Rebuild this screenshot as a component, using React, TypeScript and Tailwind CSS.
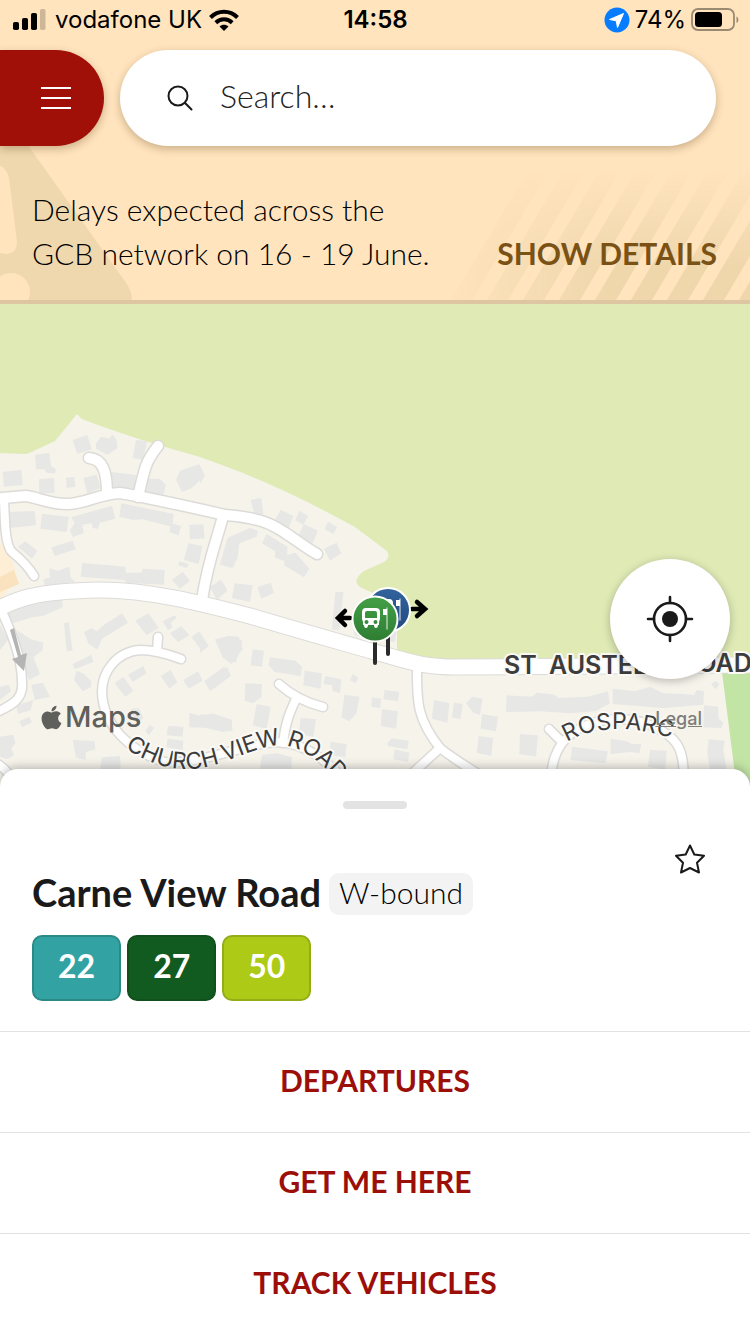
import { FaApple } from "react-icons/fa";

const routes = [
  { number: "22", style: "border-[#2b8a88] bg-[#32a3a2]" },
  { number: "27", style: "border-[#0f501d] bg-[#115a20]" },
  { number: "50", style: "border-[#94ad17] bg-[#adca17]" },
];

const actions = ["DEPARTURES", "GET ME HERE", "TRACK VEHICLES"];

const wideRoads = [
  "M-10 613C15 599 35 591 100 590C150 590 200 603 250 616C300 631 340 642 375 652C405 660 420 667 455 667L760 665",
];

const roads = [
  "M2 498L26 496C40 498 48 504 67 504C85 504 98 494 120 493C145 497 190 507 225 515C265 518 275 526 290 536C300 543 308 549 317 554",
  "M89 458C103 459 107 472 107 494",
  "M158 446C146 461 145 466 138 497",
  "M223 516C217 540 208 560 202 600",
];

const lanes = [
  "M4 498C5 530 6 546 12 552C22 560 28 566 34 576",
  "M0 607C8 625 22 655 22 682C24 700 10 706 -5 713",
  "M181 659C165 653 153 650 140 650C116 652 102 672 102 692C103 725 130 752 165 762C205 764 240 745 275 742C300 742 320 755 340 775",
  "M158 637L157 651",
  "M279 684C290 694 303 702 323 707",
  "M296 699C290 712 286 720 283 743",
  "M417 668C417 700 416 718 440 748C455 760 468 767 490 782",
  "M440 748L405 780",
  "M549 729L560 740",
  "M549 788C552 765 554 748 570 735C595 715 635 714 662 731C678 740 686 752 683 788",
  "M-6 762C5 767 12 776 18 790",
];

const tiles = [
  {
    transform: "translate(0 400) scale(.3333)",
    shapes: [
      "M218 120L262 105L275 148L232 162Z",
      "M288 130L304 110L328 116L338 103L350 120L352 145L322 164L288 146Z",
      "M408 120L441 124L430 180L398 174Z",
      "M105 164L148 158L153 198L168 208L165 220L138 218L134 207L108 208Z",
      "M8 215L64 210L68 255L12 260Z",
      "M117 238L162 234L164 278L118 282Z",
      "M198 234L223 230L226 260L200 264Z",
      "M250 234L290 224L302 264L262 280Z",
      "M334 216L408 225L404 266L330 259Z",
      "M438 236L480 236L497 254L491 284L432 276Z",
      "M528 240L540 212L598 193L615 228L575 264L546 276Z",
      "M24 336L104 333L108 376L28 384Z",
      "M126 341L206 350L200 396L121 386Z",
      "M214 352L336 317L346 356L299 368L294 386L278 384L275 370L246 374L252 398L218 412L210 390L224 370Z",
      "M364 310L522 342L516 380L428 358L400 360L358 350Z",
      "M514 370L543 378L536 406L508 396Z",
      "M568 375L610 373L614 415L570 418Z",
      "M565 430L607 438L596 492L552 480Z",
      "M538 484L566 492L560 504L535 496Z",
      "M76 424L112 452L96 476L54 440Z",
      "M154 442L218 422L228 448L164 468Z",
      "M247 489L376 500L378 518L424 518L428 506L494 510L492 554L378 548L374 540L242 530Z",
      "M148 505L174 512L208 500L212 532L224 545L134 558L130 538L150 532Z",
      "M516 540L548 515L570 542L540 566Z",
      "M634 568L658 540L682 572L652 598Z",
      "M750 384L688 420L660 490L700 502L716 452L704 436L750 412Z",
      "M704 556L750 556L750 600L698 594Z",
    ],
  },
  {
    transform: "translate(200 440) scale(.3333)",
    shapes: [
      "M0 80L14 108L0 132Z",
      "M152 180L184 174L190 222L164 226Z",
      "M222 244L242 210L280 228L266 264Z",
      "M298 212L325 228L310 254L286 240Z",
      "M312 252L354 272L338 310L294 290Z",
      "M384 245L411 262L400 282L374 268Z",
      "M372 326L410 308L424 340L390 362Z",
      "M200 282L262 320L262 345L286 338L328 386L312 412L252 376L254 364L224 352L226 334L186 310Z",
      "M150 264L174 272L170 290L118 310L112 356L96 384L60 374L82 294Z",
      "M30 440L64 420L82 450L48 476Z",
      "M104 430L158 436L150 486L96 474Z",
      "M172 442L212 428L222 458L184 476Z",
      "M406 456L430 456L418 570L396 568Z",
      "M460 574L590 574L584 606L466 588Z",
    ],
  },
  {
    transform: "translate(0 570) scale(.3333)",
    shapes: [
      "M18 130L104 92L186 90L188 112L128 138L96 142L40 160Z",
      "M0 165L24 210L0 240Z",
      "M50 180L90 206L130 218L128 240L100 262L120 312L88 330L70 290Z",
      "M94 344L128 338L150 380L104 390Z",
      "M48 406L100 390L92 420L54 432Z",
      "M192 160L206 156L218 242L200 244Z",
      "M252 186L276 174L290 184L316 162L366 130L384 158L306 206L292 238L266 222Z",
      "M406 152L446 130L476 174L440 196Z",
      "M488 154L524 136L530 144L512 158L518 172L504 180Z",
      "M510 190L544 168L568 196L534 216Z",
      "M574 202L598 184L626 228L606 242Z",
      "M645 208L690 198L716 200L728 238L694 282L668 262Z",
      "M218 282L274 254L280 276L224 298Z",
      "M230 302L252 312L274 334L272 352L248 364L222 330Z",
      "M344 340L370 320L400 362L376 380Z",
      "M384 314L430 288L440 310L398 336Z",
      "M482 318L512 300L532 336L508 356Z",
      "M550 330L594 304L608 332L566 356Z",
      "M616 334L682 290L692 318L636 360Z",
      "M568 428L622 444L632 430L694 450L698 482L666 486L640 474L568 472Z",
      "M504 468L550 470L548 500L500 496Z",
      "M502 506L550 512L548 540L500 532Z",
      "M218 510L284 514L286 538L258 546L256 570L228 562Z",
      "M0 500L40 494L46 520L34 536L42 556L20 568L0 560Z",
      "M58 454L88 440L96 456L66 472Z",
      "M0 350L26 344L34 362L0 390Z",
      "M306 562L360 558L362 600L300 600Z",
      "M392 418L416 414L430 444L410 460Z",
      "M436 482L450 464L462 474L446 496Z",
    ],
  },
  {
    transform: "translate(200 620) scale(.3333)",
    shapes: [
      "M0 40L24 80L0 98Z",
      "M46 60L86 48L128 62L108 126L84 126Z",
      "M12 184L72 140L92 168L30 212Z",
      "M158 88L192 92L186 140L152 136Z",
      "M210 112L286 122L306 140L302 168L224 156L206 136Z",
      "M314 152L366 160L362 206L310 196Z",
      "M376 168L424 178L420 220L398 212L396 196L370 192Z",
      "M458 162L476 174L466 190L450 180Z",
      "M136 190L186 192L184 232L158 250L134 242Z",
      "M170 252L212 260L200 326L158 316Z",
      "M302 294L348 298L340 350L296 342Z",
      "M434 224L478 230L470 280L448 304L424 292Z",
      "M516 232L544 236L540 264L514 260Z",
      "M554 210L598 216L594 244L550 238Z",
      "M546 268L594 274L588 326L542 318Z",
      "M392 366L440 372L436 412L386 404Z",
      "M562 370L576 355L626 362L622 388L564 378Z",
      "M584 388L628 398L624 426L580 418Z",
      "M702 240L748 250L742 308L696 296Z",
      "M762 248L788 252L782 298L756 292Z",
      "M798 250L816 230L848 236L840 284L820 278Z",
      "M846 282L894 290L888 334L842 326Z",
      "M836 348L880 354L874 408L830 398Z",
      "M0 284L44 282L96 300L94 330L50 332L0 318Z",
      "M186 404L232 400L276 412L274 446L180 446Z",
    ],
  },
  {
    transform: "translate(450 550) scale(.3333)",
    shapes: [
      "M170 436L246 440L260 428L314 434L324 444L414 440L474 424L480 460L436 484L360 490L270 484L168 486Z",
      "M488 416L556 424L600 410L640 430L700 432L732 436L740 420L762 424L760 464L640 474L488 462Z",
      "M784 402L798 392L808 404L796 418Z",
      "M762 466L804 470L806 506L820 518L814 534L760 532Z",
      "M210 552L264 556L258 620L208 612Z",
      "M366 590L474 604L466 640L362 630Z",
      "M482 566L530 574L546 582L574 582L568 610L540 606L482 612Z",
      "M600 600L650 602L646 660L594 650Z",
      "M776 568L824 572L820 600L830 660L780 660L772 606Z",
    ],
  },
];

function SignalIcon() {
  return (
    <svg className="h-6 w-9" viewBox="0 0 36 24" aria-label="Signal strength">
      <rect x="1" y="14" width="6" height="8" rx="1.8" />
      <rect x="10" y="10" width="6" height="12" rx="1.8" />
      <rect x="19" y="5" width="6" height="17" rx="1.8" />
      <rect x="28" y="1" width="5.5" height="21" rx="1.8" fill="#cdb798" />
    </svg>
  );
}

function WifiIcon() {
  return (
    <svg className="h-6 w-[30px]" viewBox="0 0 30 24" fill="none" stroke="#000" strokeWidth="4" aria-label="Wi-Fi">
      <path d="M1.500 9.500C9 1.800 21 1.800 28.500 9.500" />
      <path d="M6.800 14.800C11.500 10.200 18.500 10.200 23.200 14.800" />
      <path d="M10.500 18.500C13 16.200 17 16.200 19.500 18.500L15 23Z" fill="#000" stroke="none" />
    </svg>
  );
}

function LocationIcon() {
  return (
    <svg className="size-[26px]" viewBox="0 0 26 26" aria-label="Location in use">
      <circle cx="13" cy="13" r="12.500" fill="#087cff" />
      <path d="M19.500 6.500L13.500 20.500L12.200 13.800L5.500 12.500Z" fill="#fff" stroke="#fff" strokeLinejoin="round" />
    </svg>
  );
}

function BatteryIcon() {
  return (
    <svg className="h-6 w-12" viewBox="0 0 48 24" aria-label="Battery">
      <rect x="1" y="1" width="42" height="21" rx="6" fill="none" stroke="#9b8a72" strokeWidth="1.800" />
      <rect x="4" y="4" width="27" height="15" rx="3.500" />
      <path d="M45.500 8.500C48 9.500 48 14 45.500 15Z" fill="#9b8a72" />
    </svg>
  );
}

function StatusBar() {
  return (
    <div className="grid h-10 grid-cols-[1fr_auto_1fr] items-center pr-[11px] pl-3 font-[Inter,sans-serif] text-2xl text-black">
      <div className="flex items-center gap-[7px]">
        <SignalIcon />
        <span>vodafone UK</span>
        <WifiIcon />
      </div>
      <span className="font-semibold">14:58</span>
      <div className="flex items-center justify-end gap-[5px]">
        <LocationIcon />
        <span>74%</span>
        <BatteryIcon />
      </div>
    </div>
  );
}

function AlertDecoration() {
  return (
    <>
      <svg className="absolute bottom-0 left-0 h-[170px] w-[140px]" viewBox="0 130 140 170" aria-hidden="true">
        <path d="M0 130H17L124 280Q132 290 132 300H0Z" fill="#f0d8ae" />
        <path d="M-12 165Q5 162 9 178L17 242Q17 253 7 254L-8 252Z" fill="#ffe4be" />
        <circle cx="11" cy="292" r="19" fill="#ffe4be" />
      </svg>
      <svg className="absolute right-0 bottom-0 h-[130px] w-[310px]" viewBox="440 170 310 130" aria-hidden="true">
        <defs>
          <linearGradient id="stripe-x" x1="0" x2="1">
            <stop offset="0" stopColor="#fff" stopOpacity="0" />
            <stop offset=".55" stopColor="#fff" />
          </linearGradient>
          <linearGradient id="stripe-y" x1="0" y1="0" x2="0" y2="1">
            <stop offset="0" stopColor="#000" />
            <stop offset=".75" stopColor="#000" stopOpacity="0" />
          </linearGradient>
          <mask id="stripe-mask" maskUnits="userSpaceOnUse" x="440" y="170" width="310" height="130">
            <rect x="440" y="170" width="310" height="130" fill="url(#stripe-x)" />
            <rect x="440" y="170" width="310" height="130" fill="url(#stripe-y)" />
          </mask>
        </defs>
        <g mask="url(#stripe-mask)" fill="#efd6ab">
          {[451, 487, 523, 559, 595, 631, 667, 703, 739].map((x) => (
            <path key={x} d={`M${x} 300h21l77 -130h-21Z`} />
          ))}
        </g>
      </svg>
    </>
  );
}

function Header() {
  return (
    <header className="relative border-b-4 border-[#dfc6a3] bg-[#ffe4be]">
      <AlertDecoration />
      <div className="relative">
        <StatusBar />
        <div className="flex gap-4 pt-[10px] pr-[34px]">
          <button
            type="button"
            aria-label="Menu"
            className="flex h-24 w-[104px] items-center justify-end rounded-r-full bg-[#a11008] pr-[33px] shadow-[0_3px_8px_rgba(80,50,10,0.3)]"
          >
            <svg className="h-6 w-[30px]" viewBox="0 0 30 24" stroke="#fff" strokeWidth="2" aria-hidden="true">
              <path d="M0 2H30M0 12H30M0 22H30" />
            </svg>
          </button>
          <label className="flex h-24 min-w-0 flex-1 items-center gap-[27px] rounded-full bg-white pr-8 pl-[47px] shadow-[0_3px_8px_rgba(80,50,10,0.3)]">
            <svg className="size-[26px] shrink-0" viewBox="0 0 26 26" fill="none" stroke="#1a1a1a" strokeWidth="2" strokeLinecap="round" aria-hidden="true">
              <circle cx="11" cy="11" r="9.500" />
              <path d="M17.800 17.800L24.500 24.500" />
            </svg>
            <input
              type="search"
              aria-label="Search"
              placeholder="Search…"
              className="min-w-0 flex-1 bg-transparent pb-1 text-[32px] font-light outline-none placeholder:text-[#222]"
            />
          </label>
        </div>
        <div className="flex items-end justify-between gap-8 pt-[41px] pr-[33px] pb-[25px] pl-8 text-[30px] leading-[44px]">
          <p className="w-[410px] font-light text-black">Delays expected across the GCB network on 16 - 19 June.</p>
          <button type="button" className="shrink-0 font-bold text-[#7a5216]">
            SHOW DETAILS
          </button>
        </div>
      </div>
    </header>
  );
}

function BusGlyph({ x, y }: { x: number; y: number }) {
  return (
    <g transform={`translate(${x} ${y})`}>
      <path
        fill="#fff"
        fillRule="evenodd"
        d="M-9 -10H1Q5 -10 5 -6V1L4 4V7H3Q3 10 1 10Q-1 10 -1 7H-7Q-7 10 -9 10Q-11 10 -11 7H-12V4L-13 1V-6Q-13 -10 -9 -10ZM-8 -7Q-10 -7 -10 -5V0H2V-5Q2 -7 0 -7ZM-8.500 2A2 2 0 1 0 -8.500 6A2 2 0 1 0 -8.500 2ZM.5 2A2 2 0 1 0 .5 6A2 2 0 1 0 .5 2Z"
      />
      <path d="M12 -10V11" stroke="#fff" strokeOpacity=".6" strokeWidth="1.500" />
      <rect x="8" y="-9" width="4" height="6" fill="#fff" />
    </g>
  );
}

function StreetMap() {
  return (
    <svg
      className="absolute inset-0 size-full"
      viewBox="0 304 750 481"
      preserveAspectRatio="xMidYMin slice"
      role="img"
      aria-label="Map around Carne View Road"
    >
      <defs>
        <linearGradient id="pin-green" x1="0" y1="0" x2="0" y2="1">
          <stop offset="0" stopColor="#43a047" />
          <stop offset="1" stopColor="#2e7d32" />
        </linearGradient>
        <linearGradient id="pin-blue" x1="0" y1="0" x2="0" y2="1">
          <stop offset="0" stopColor="#31639c" />
          <stop offset="1" stopColor="#22497f" />
        </linearGradient>
        <path id="church-view" d="M125 748C145 761 165 770 192 769C225 766 250 748 278 745C300 745 320 760 345 790" />
        <path id="rosparc" d="M567 742C595 725 635 725 680 741" />
      </defs>
      <rect x="0" y="304" width="750" height="486" fill="#dfeab5" />
      <path
        fill="#f5f3ea"
        d="M0 453L27 454L55 441L77 414L82 419C120 434 165 447 200 457C255 476 300 497 355 527L387 551Q391 557 384 562L364 571Q350 582 362 588L380 596L397 615V667H750V790H0Z"
      />
      <path d="M722 672L737 790H750V672Z" fill="#c2e4a4" />
      <path d="M0 542L14 564L16 580L0 600Z" fill="#fdeed5" />
      <path d="M0 577L14 570L19 584L0 592Z" fill="#f9e2bd" />
      {tiles.map((tile) => (
        <g key={tile.transform} transform={tile.transform} fill="#e7e7e6">
          {tile.shapes.map((d) => (
            <path key={d} d={d} />
          ))}
        </g>
      ))}
      <g fill="none" strokeLinecap="round" strokeLinejoin="round">
        <g stroke="#dcdbd8">
          {wideRoads.map((d) => <path key={d} d={d} strokeWidth="17" />)}
          {roads.map((d) => <path key={d} d={d} strokeWidth="13" />)}
          {lanes.map((d) => <path key={d} d={d} strokeWidth="11" />)}
        </g>
        <g stroke="#fff">
          {wideRoads.map((d) => <path key={d} d={d} strokeWidth="15" />)}
          {roads.map((d) => <path key={d} d={d} strokeWidth="10" />)}
          {lanes.map((d) => <path key={d} d={d} strokeWidth="8" />)}
        </g>
      </g>
      <path d="M10 630L14 628L21 655L27 653L24 671L12 659L18 657Z" fill="#b4b4b4" />
      <g
        className="font-[Inter,sans-serif]"
        fill="#3c3c3c"
        stroke="#faf9f5"
        strokeWidth="4"
        strokeLinejoin="round"
        paintOrder="stroke"
      >
        <g fontSize="25" fontWeight="600">
          <text x="504" y="674">ST</text>
          <text x="549" y="674">AUSTELL</text>
          <text x="681" y="672">ROAD</text>
        </g>
        <g fontSize="23">
          <text>
            <textPath href="#church-view">CHURCH</textPath>
          </text>
          <text>
            <textPath href="#church-view" startOffset="105">VIEW</textPath>
          </text>
          <text>
            <textPath href="#church-view" startOffset="169">ROAD</textPath>
          </text>
          <text>
            <textPath href="#rosparc">ROSPARC</textPath>
          </text>
        </g>
      </g>
      <g strokeLinecap="round">
        <path d="M388 625V654M375 640V663" stroke="#2b2b2b" strokeWidth="4" />
        <path d="M412 609H424M417 602L425 609L417 616" fill="none" stroke="#000" strokeWidth="4.500" />
        <circle cx="388" cy="610" r="22" fill="url(#pin-blue)" stroke="#fff" strokeWidth="2" />
        <BusGlyph x={388} y={609} />
        <path d="M350 618H339M345 611L338 618L345 625" fill="none" stroke="#000" strokeWidth="4.500" />
        <circle cx="375" cy="619" r="22.500" fill="url(#pin-green)" stroke="#fff" strokeWidth="2" />
        <BusGlyph x={375} y={618} />
      </g>
    </svg>
  );
}

function MapPanel() {
  return (
    <section className="relative min-h-[300px] flex-1 overflow-hidden">
      <StreetMap />
      <div className="absolute inset-x-0 bottom-[50px] flex items-center justify-between pr-12 pl-[38px] font-[Inter,sans-serif] text-[#5f5f5c]">
        <span className="flex items-center text-[29px] leading-9 font-medium">
          <FaApple className="size-[27px]" aria-hidden="true" />
          Maps
        </span>
        <a href="#legal" className="pt-1 text-lg font-medium text-[#7d7d7a] underline">
          Legal
        </a>
      </div>
      <button
        type="button"
        aria-label="Show my location"
        className="absolute right-5 bottom-[106px] flex size-[120px] items-center justify-center rounded-full bg-white shadow-[0_2px_8px_rgba(0,0,0,0.25)]"
      >
        <svg className="size-12" viewBox="0 0 48 48" fill="none" stroke="#1a1a1a" strokeWidth="2.600" strokeLinecap="round" aria-hidden="true">
          <circle cx="24" cy="24" r="16" />
          <circle cx="24" cy="24" r="8" fill="#1a1a1a" stroke="none" />
          <path d="M24 2V8M24 40V46M2 24H8M40 24H46" />
        </svg>
      </button>
    </section>
  );
}

function StopSheet() {
  return (
    <section className="relative -mt-4 rounded-t-[18px] bg-white pt-8 shadow-[0_-2px_10px_rgba(0,0,0,0.25)]">
      <div className="mx-auto h-2 w-16 rounded-full bg-[#e3e3e3]" />
      <div className="flex items-start justify-between px-8 pt-[35px] pb-[30px]">
        <div className="pt-[29px]">
          <div className="flex items-center gap-2 leading-[38px]">
            <h1 className="pb-1 text-[38px] font-bold">Carne View Road</h1>
            <span className="rounded-[10px] bg-[#f3f3f3] px-[10px] pb-1 text-[30px] font-light text-black">W-bound</span>
          </div>
          <ul className="mt-5 flex gap-[6px]">
            {routes.map((route) => (
              <li
                key={route.number}
                className={`rounded-[10px] border-2 px-6 pb-1 text-[32px] leading-[58px] font-bold text-white ${route.style}`}
              >
                {route.number}
              </li>
            ))}
          </ul>
        </div>
        <button type="button" aria-label="Add to favourites" className="mr-[13px]">
          <svg className="size-[30px]" viewBox="0 0 30 30" fill="none" stroke="#1a1a1a" strokeWidth="2" strokeLinejoin="round" aria-hidden="true">
            <path d="M15 1.500L19.300 10.500L29 11.800L22 18.700L24 28.500L15 24L6 28.500L8 18.700L1 11.800L10.700 10.500Z" />
          </svg>
        </button>
      </div>
      {actions.map((action) => (
        <button
          key={action}
          type="button"
          className="block h-[101px] w-full border-t border-[#e2e2e2] pb-1 text-[30px] font-bold text-[#9b0f08]"
        >
          {action}
        </button>
      ))}
    </section>
  );
}

export default function App() {
  return (
    <main className="flex min-h-screen flex-col bg-white font-[Lato,sans-serif] text-[#1a1a1a]">
      <Header />
      <MapPanel />
      <StopSheet />
    </main>
  );
}
